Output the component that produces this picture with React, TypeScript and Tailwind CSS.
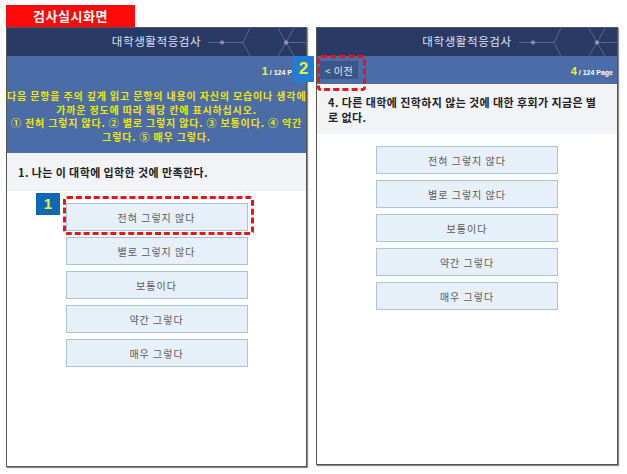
import React from "react";

const KR = { fontFamily: '"Noto Sans CJK KR", "Noto Sans", sans-serif' };
const LAT = { fontFamily: '"Liberation Sans", Arial, sans-serif' };

const options = ["전혀 그렇지 않다", "별로 그렇지 않다", "보통이다", "약간 그렇다", "매우 그렇다"];

const HexPattern: React.FC = () => (
  <svg
    className="absolute right-0 top-0"
    width="100"
    height="28"
    viewBox="0 0 100 28"
    fill="none"
  >
    <g stroke="#ffffff" strokeOpacity="0.22" strokeWidth="1">
      <path d="M2 14.5H16M16 14.5H37M37 14.5L44 0M37 14.5L44 28" />
      <path d="M72 0L80 14.5L72 28M80 14.5H100M80 14.5L88 0M80 14.5L88 28" />
    </g>
    <circle cx="16" cy="14.5" r="2.2" fill="#ffffff" fillOpacity="0.35" />
    <circle cx="80" cy="14.5" r="2.2" fill="#ffffff" fillOpacity="0.35" />
  </svg>
);

const Header: React.FC = () => (
  <div className="relative h-[28px] bg-[#2a3a66] flex items-center justify-center overflow-hidden">
    <span className="text-[11.5px] text-[#dfe4ef] tracking-[0.6px]" style={KR}>
      대학생활적응검사
    </span>
    <HexPattern />
  </div>
);

const Options: React.FC = () => (
  <div className="flex flex-col items-center gap-[6px] pt-[12px]">
    {options.map((o) => (
      <div
        key={o}
        className="w-[182px] h-[28px] bg-[#e7eff8] border border-[#a8c4dd] flex items-center justify-center text-[10px] text-[#5a5a5a] tracking-[1px]"
        style={KR}
      >
        {o}
      </div>
    ))}
  </div>
);

const App: React.FC = () => {
  return (
    <div className="w-[627px] h-[474px] bg-white pt-[5px] pl-[6px] relative">
      <div
        className="w-[129px] h-[22px] bg-[#ff0a0a] text-white text-[13px] font-bold flex items-center justify-center tracking-[0.5px]"
        style={KR}
      >
        검사실시화면
      </div>

      <div className="flex gap-[9px]">
        {/* left screen */}
        <div className="relative w-[301px] h-[440px] border border-[#555] shadow-[1px_1px_1px_rgba(0,0,0,0.45)] bg-white">
          <Header />
          <div className="bg-[#4a6da8] pb-[10px]">
            <div className="h-[28px] flex items-center justify-end pr-[14px]">
              <span className="font-bold" style={LAT}>
                <span className="text-[11px] text-[#f4ea3a]">1</span>
                <span className="text-[7px] text-white"> / 124 P</span>
              </span>
            </div>
            <div
              className="mt-[5px] text-center text-[10px] font-bold leading-[13.5px] tracking-[0.85px] text-[#f3e600]"
              style={KR}
            >
              <div className="whitespace-nowrap">다음 문항을 주의 깊게 읽고 문항의 내용이 자신의 모습이나 생각에</div>
              <div className="whitespace-nowrap">가까운 정도에 따라 해당 칸에 표시하십시오.</div>
              <div className="whitespace-nowrap">① 전혀 그렇지 않다. ② 별로 그렇지 않다. ③ 보통이다. ④ 약간</div>
              <div className="whitespace-nowrap">그렇다. ⑤ 매우 그렇다.</div>
            </div>
          </div>
          <div
            className="h-[38px] bg-[#f2f3f6] flex items-center px-[11px] text-[11px] font-semibold tracking-[0.4px] text-[#222]"
            style={KR}
          >
            1. 나는 이 대학에 입학한 것에 만족한다.
          </div>
          <Options />

          <div className="absolute left-[56px] top-[168px] w-[191px] h-[39px] border-[3px] border-dashed border-[#e8141c] rounded-[4px]" />
          <div
            className="absolute left-[29px] top-[165px] w-[24px] h-[22px] bg-[#0f68b5] text-[#f4ee2a] text-[15px] font-bold flex items-center justify-center"
            style={LAT}
          >
            1
          </div>
        </div>

        {/* right screen */}
        <div className="relative w-[302px] h-[438px] border border-[#555] shadow-[1px_1px_1px_rgba(0,0,0,0.45)] bg-white">
          <Header />
          <div className="h-[28px] bg-[#4a6da8] flex items-center justify-between pl-[3px] pr-[4px]">
            <div
              className="h-[18px] px-[5px] bg-[#3b5688] text-[10px] text-[#e8ecf4] flex items-center tracking-[0.5px]"
              style={KR}
            >
              &lt; 이전
            </div>
            <span className="font-bold" style={LAT}>
              <span className="text-[11px] text-[#f4ea3a]">4</span>
              <span className="text-[7px] text-white"> / 124 Page</span>
            </span>
          </div>
          <div
            className="bg-[#f2f3f6] px-[11px] pt-[11px] pb-[9px] text-[11px] font-semibold leading-[15px] tracking-[0.4px] text-[#222]"
            style={KR}
          >
            4. 다른 대학에 진학하지 않는 것에 대한 후회가 지금은 별
            <br />
            로 없다.
          </div>
          <Options />

          <div className="absolute left-[0px] top-[27px] w-[49px] h-[36px] border-[3px] border-dashed border-[#e8141c] rounded-[4px]" />
        </div>
      </div>

      <div
        className="absolute left-[293px] top-[56px] w-[21px] h-[26px] bg-[#1f7fd6] text-[#f4ee2a] text-[17px] font-bold flex items-center justify-center"
        style={LAT}
      >
        2
      </div>
    </div>
  );
};

export default App;
